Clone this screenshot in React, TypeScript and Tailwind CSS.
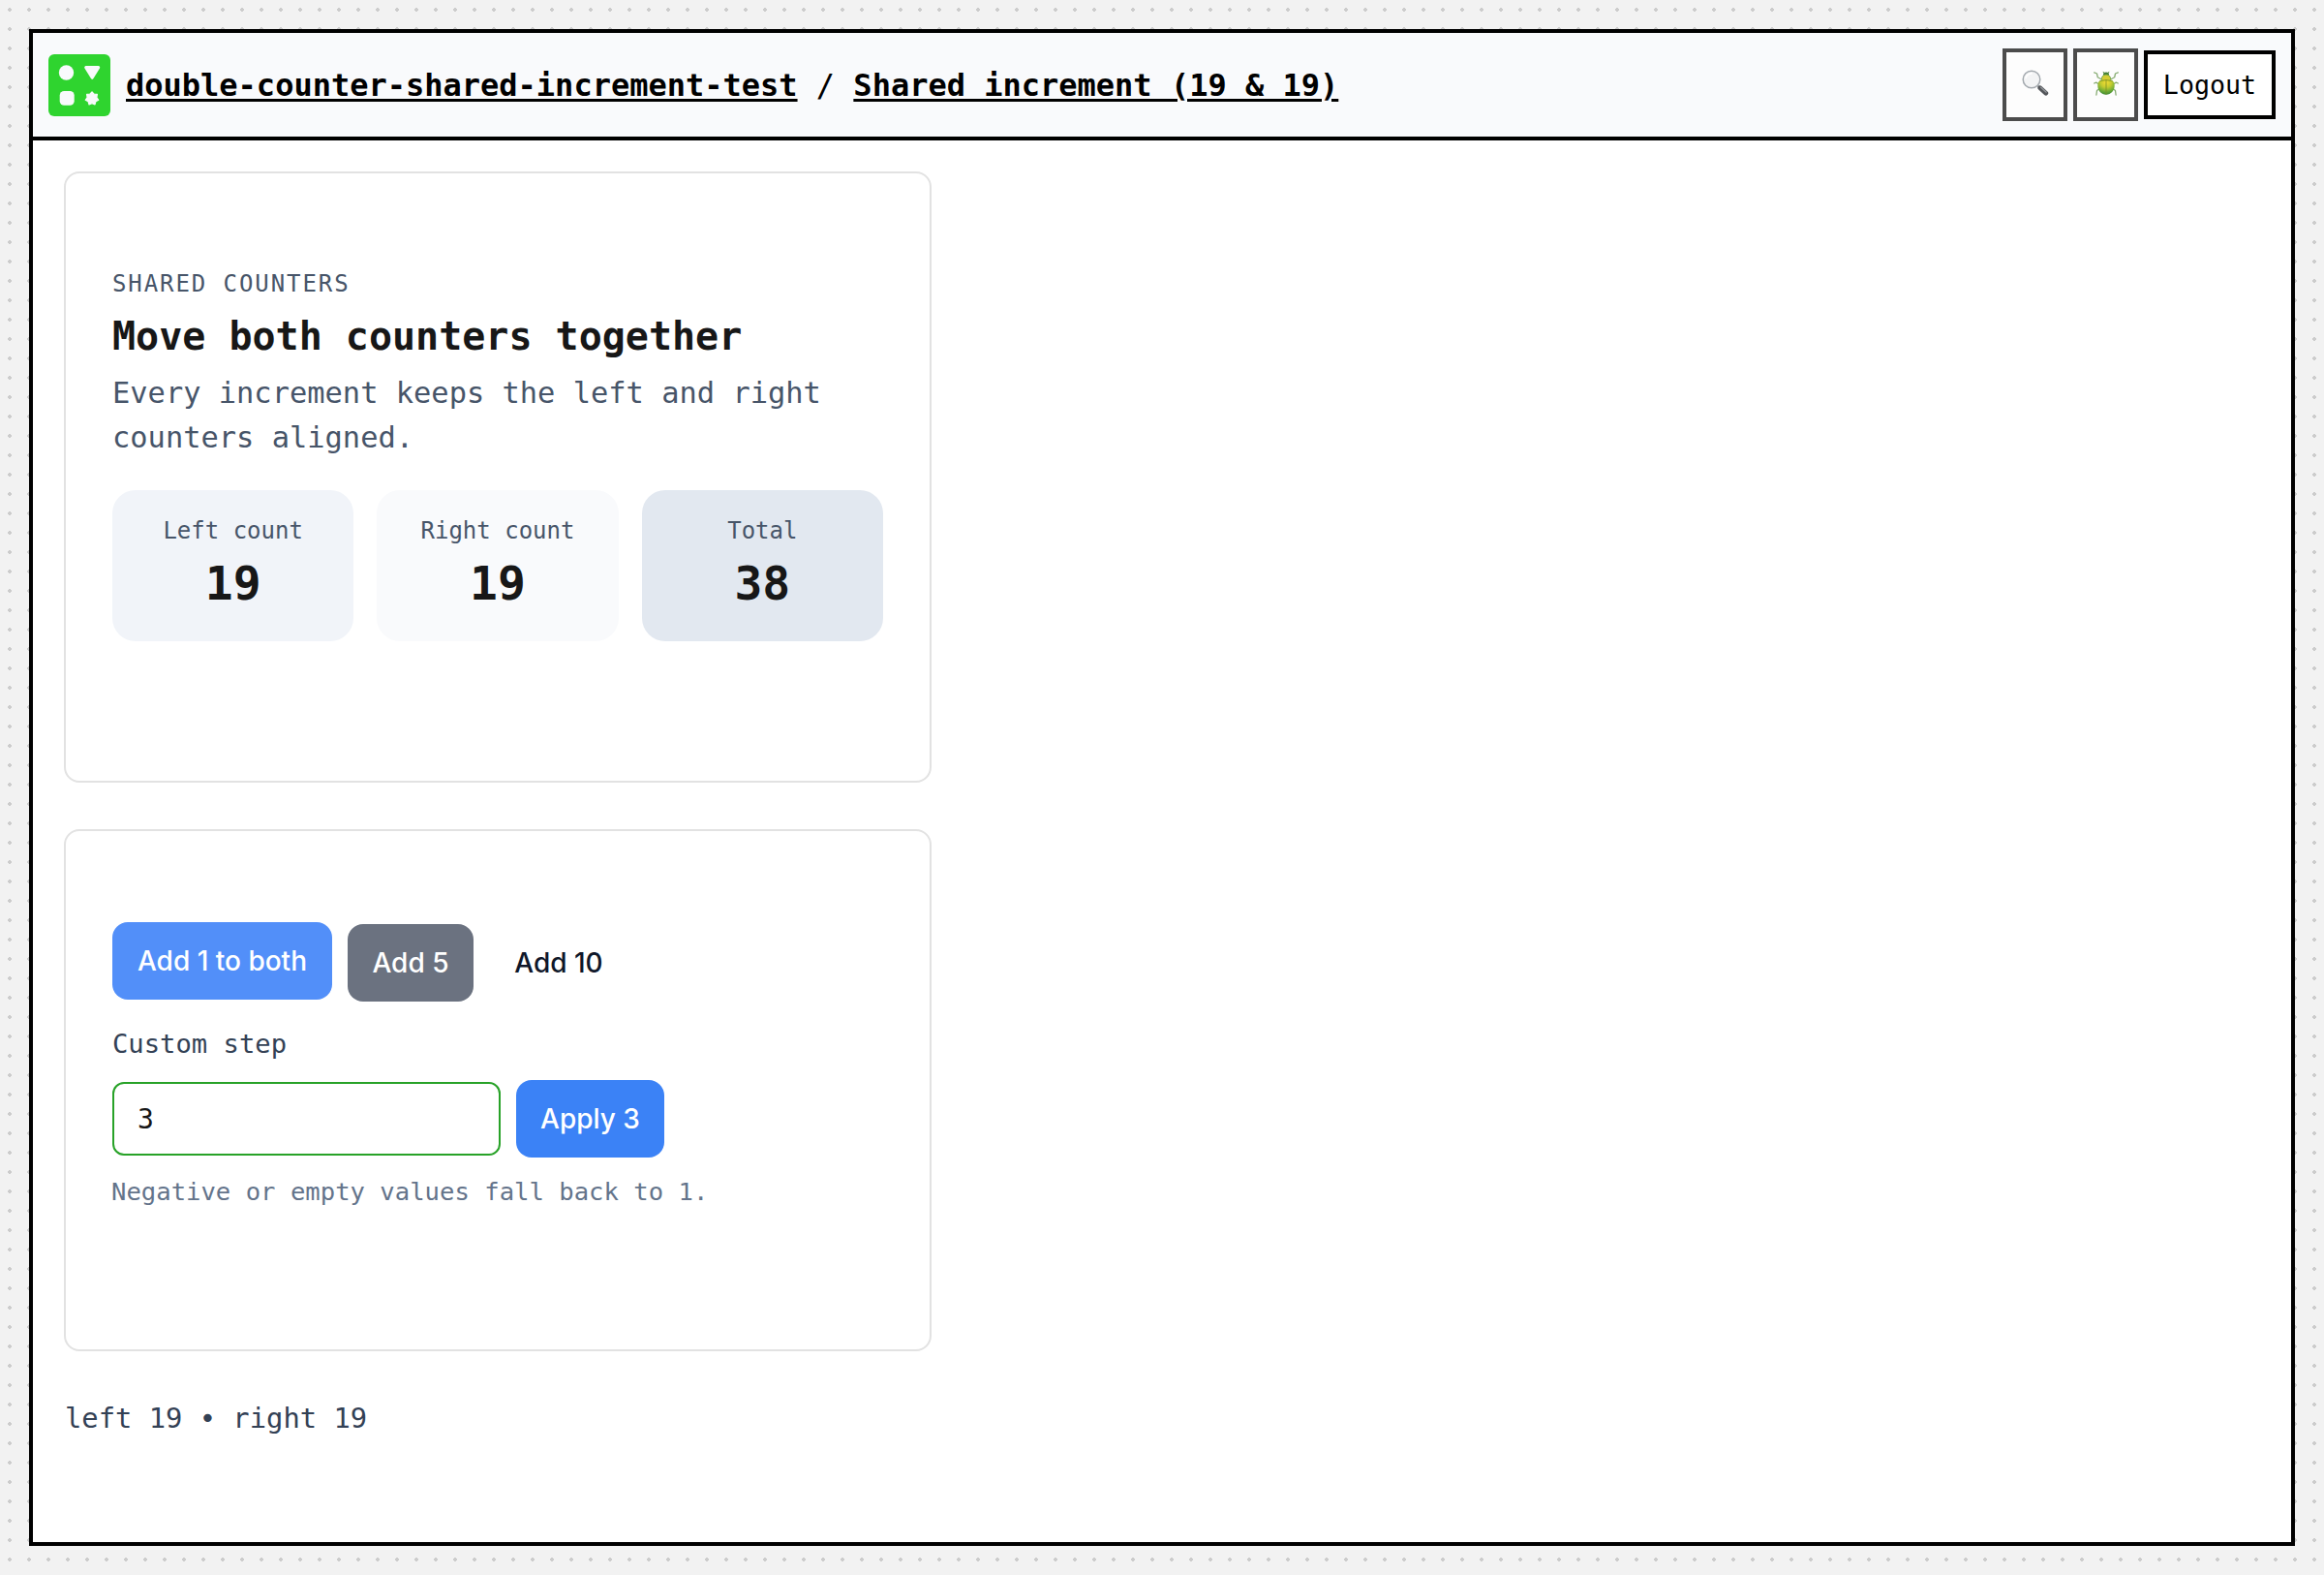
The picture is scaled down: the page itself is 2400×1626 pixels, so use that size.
import React from "react";

const mono = "font-['DejaVu_Sans_Mono','Liberation_Mono',monospace]";
const sans = "font-['Inter','Liberation_Sans',sans-serif]";

// Seven-pointed star centred in the logo's lower right cell.
const starPoints = Array.from({ length: 14 }, (_, i) => {
  const r = i % 2 === 0 ? 6.9 : 5;
  const a = (Math.PI * i) / 7 - Math.PI / 2;
  return `${(45 + r * Math.cos(a)).toFixed(2)},${(45.7 + r * Math.sin(a)).toFixed(2)}`;
}).join(" ");

function Logo() {
  return (
    <svg width="64" height="64" viewBox="0 0 64 64" className="shrink-0">
      <rect width="64" height="64" rx="6" fill="#2fd42f" />
      <circle cx="18.5" cy="19" r="7.7" fill="#f9fafc" />
      <path d="M38.700 13.600h13L45.200 24.300z" fill="#f9fafc" stroke="#f9fafc" strokeWidth="3" strokeLinejoin="round" />
      <rect x="11.700" y="38" width="15" height="14.700" rx="4.500" fill="#f9fafc" />
      <polygon points={starPoints} fill="#f9fafc" stroke="#f9fafc" strokeWidth="1.200" strokeLinejoin="round" />
    </svg>
  );
}

function Magnifier() {
  return (
    <svg width="28" height="28" viewBox="0 0 28 28">
      <path d="M16.500 16.500l2.500 2.500" stroke="#9a9da0" strokeWidth="2.400" />
      <path d="M18.800 18.800l6 5.400" stroke="#54575b" strokeWidth="4.800" strokeLinecap="round" />
      <path d="M19.600 18.200l5.600 5" stroke="#94979b" strokeWidth="1.200" strokeLinecap="round" />
      <circle cx="10" cy="10" r="8.800" fill="#f3f4f5" stroke="#a3a9ae" strokeWidth="1.500" />
      <path d="M4 8.500a6.500 6.500 0 0 1 6-4.600" stroke="#ffffff" strokeWidth="1.600" fill="none" strokeLinecap="round" />
    </svg>
  );
}

function Beetle() {
  return (
    <svg width="28" height="28" viewBox="0 0 28 28" fill="none">
      <defs>
        <radialGradient id="shell" cx="0.5" cy="0.2" r="0.8">
          <stop offset="0" stopColor="#f5dc32" />
          <stop offset="0.4" stopColor="#c3cb30" />
          <stop offset="0.75" stopColor="#6cab35" />
          <stop offset="1" stopColor="#3f8a36" />
        </radialGradient>
      </defs>
      <g stroke="#86ab72" strokeWidth="1.300" strokeLinecap="round" strokeLinejoin="round">
        <path d="M8.500 9.500L5.300 7.800 4.500 4 1.700 2.800M19.500 9.500l3.200-1.700L23.500 4l2.800-1.200" />
        <path d="M6 14.500l-2.300-1.400-2 .9M22 14.500l2.300-1.400 2 .9" />
        <path d="M6.500 20l-2 1.500-.6 4.500M21.500 20l2 1.500.6 4.500" />
      </g>
      <path d="M12 3.200L11 2.200M16 3.200l1-1" stroke="#5b8f45" strokeWidth="1" strokeLinecap="round" />
      <ellipse cx="14" cy="4.700" rx="3" ry="2.200" fill="#447f38" />
      <path d="M9.200 10.500C9.200 7 11 5 14 5s4.800 2 4.800 5.500z" fill="#d5cd35" stroke="#5f9c40" strokeWidth="0.800" />
      <path d="M5.300 16.300c0-4.300 2.700-6.200 8.700-6.200s8.700 1.900 8.700 6.200c0 5.200-3.700 9.400-8.700 9.400s-8.700-4.200-8.700-9.400z" fill="url(#shell)" />
      <path d="M14 10.500v15M7.200 11.700q6.800-2.200 13.600 0" stroke="#7a8f24" strokeWidth="0.800" />
    </svg>
  );
}

function IconButton({ label, children }: { label: string; children: React.ReactNode }) {
  return (
    <button
      aria-label={label}
      className="flex h-[75px] w-[67px] items-center justify-center border-4 border-[#4c4c4c] bg-[#fdfdfd] pb-1"
    >
      {children}
    </button>
  );
}

function Stat({ label, value, tone }: { label: string; value: number; tone: string }) {
  return (
    <div className={`flex h-[156px] flex-col items-center rounded-3xl pt-6 ${tone}`}>
      <span className="text-2xl leading-9 text-[#475569]">{label}</span>
      <span className="mt-2 text-5xl leading-[56px] font-bold text-[#171717]">{value}</span>
    </div>
  );
}

export default function App() {
  return (
    <div
      className={`h-[1626px] w-[2400px] bg-[#f2f2f2] bg-[radial-gradient(circle,#ccc_2px,transparent_2px)] bg-[size:20px_20px] p-[30px] ${mono}`}
    >
      <div className="flex h-[1566px] flex-col border-4 border-black bg-white">
        <header className="flex h-[111px] items-center justify-between border-b-4 border-black bg-[#f9fafc] px-4">
          <div className="flex items-center gap-4">
            <Logo />
            <h1 className="text-[32px] leading-10 whitespace-pre text-black">
              <a className="font-bold underline decoration-[3px] underline-offset-[3px]">double-counter-shared-increment-test</a>
              {" / "}
              <a className="font-bold underline decoration-[3px] underline-offset-[3px]">Shared increment (19 &amp; 19)</a>
            </h1>
          </div>
          <div className="flex items-center gap-1.5">
            <IconButton label="Search">
              <Magnifier />
            </IconButton>
            <IconButton label="Debug">
              <Beetle />
            </IconButton>
            <button className="h-[71px] w-[136px] border-4 border-black bg-white text-[26.67px] leading-[60px] text-black">
              Logout
            </button>
          </div>
        </header>

        <main className="flex flex-col items-start pt-8 pl-8">
          <section className="h-[631px] w-[896px] rounded-2xl border-2 border-[#e2e2e2] px-12 pt-24">
            <p className="text-2xl leading-9 tracking-[0.08em] text-[#475569]">SHARED COUNTERS</p>
            <h2 className="mt-3 text-[40px] leading-[48px] font-bold text-[#171717]">Move both counters together</h2>
            <p className="mt-3 text-[30.4px] leading-[46px] text-[#475569]">
              Every increment keeps the left and right counters aligned.
            </p>
            <div className="mt-[31px] grid grid-cols-3 gap-6">
              <Stat label="Left count" value={19} tone="bg-[#f1f4f9]" />
              <Stat label="Right count" value={19} tone="bg-[#f9fafc]" />
              <Stat label="Total" value={38} tone="bg-[#e2e8f0]" />
            </div>
          </section>

          <section className="mt-12 h-[539px] w-[896px] rounded-2xl border-2 border-[#e2e2e2] px-12 pt-[94px]">
            <div className={`flex items-start gap-4 text-[28px] font-medium ${sans}`}>
              <button className="h-20 w-[227px] rounded-2xl bg-[#528ff9] text-white">Add 1 to both</button>
              <button className="mt-0.5 h-20 w-[130px] rounded-2xl bg-[#6b7280] text-white">Add 5</button>
              <button className="mt-0.5 h-20 w-[144px] rounded-2xl text-[#0f172a]">Add 10</button>
            </div>
            <label className="mt-6 block text-[27.2px] leading-10 text-[#334155]">Custom step</label>
            <div className="mt-[17px] flex items-center gap-4">
              <input
                readOnly
                value="3"
                className="h-[76px] w-[401px] rounded-xl border-2 border-[#28a228] bg-white px-6 text-[28px] text-[#171717] outline-none"
              />
              <button className={`h-20 w-[153px] rounded-2xl bg-[#3b82f6] text-[28px] font-medium text-white ${sans}`}>Apply 3</button>
            </div>
            <p className="mt-4 -ml-px text-[25.6px] leading-[38px] text-[#64748b]">Negative or empty values fall back to 1.</p>
          </section>

          <p className="mt-[47px] ml-px text-[28.8px] leading-[44px] text-[#334155]">left 19 • right 19</p>
        </main>
      </div>
    </div>
  );
}
